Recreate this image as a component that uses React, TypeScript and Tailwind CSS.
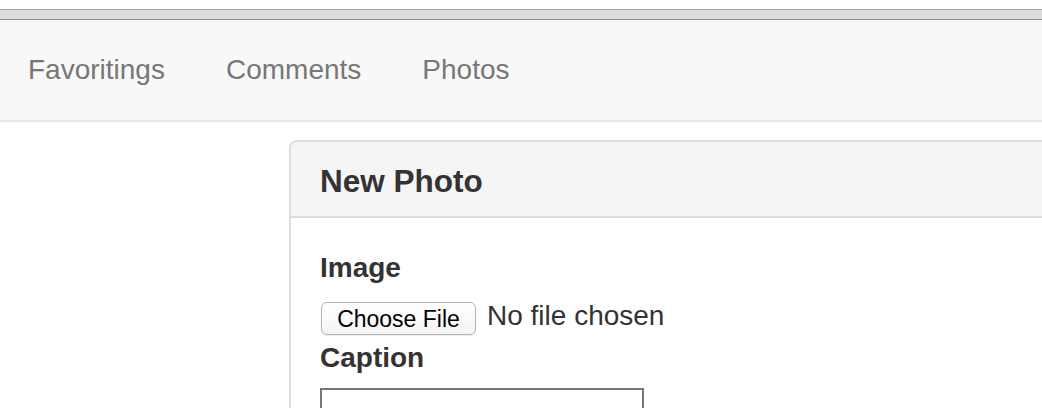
import React from 'react';

const links = ['Favoritings', 'Comments', 'Photos'];

const App = () => {
  return (
    <div className="w-[1042px] h-[408px] overflow-hidden bg-white font-['Liberation_Sans',Arial,sans-serif] text-[#333]">
      {/* browser chrome strip */}
      <div className="h-[9px] bg-white" />
      <div className="h-[11px] border-t border-b border-t-[#a9a9a9] border-b-[#8f8f8f] bg-[#dcdcdc]" />

      {/* navbar */}
      <nav className="h-[102px] bg-[#f8f8f8] border-b-2 border-[#e7e7e7]">
        <ul className="flex gap-[61px] pl-[28px] py-[30px]">
          {links.map((link) => (
            <li key={link} className="text-[28px] leading-[40px] text-[#777]">
              {link}
            </li>
          ))}
        </ul>
      </nav>

      <div className="pl-[289px] pt-[18px]">
        <div className="w-[900px] border-2 border-[#dddddd] rounded-tl-[8px] overflow-hidden">
          <div className="bg-[#f5f5f5] border-b-2 border-[#dddddd] pl-[29px] pt-[22px] pb-[18px]">
            <h3 className="text-[31.5px] leading-[34px] font-bold text-[#333]">New Photo</h3>
          </div>

          <div className="pl-[29px] pt-[30px]">
            <label className="block text-[28px] leading-[40px] font-bold mb-[10px]">Image</label>
            <div className="flex items-center gap-[11px] h-[40px] pl-[1px]">
              <button className="h-[33px] w-[155px] rounded-[6px] border border-[#b5b5b5] bg-gradient-to-b from-white to-[#f4f4f4] text-[23px] leading-none pt-[3px] text-black shadow-[0_1px_1px_rgba(0,0,0,0.08)]">
                Choose File
              </button>
              <span className="text-[28px] leading-[32px] text-[#333] -mt-[4px]">No file chosen</span>
            </div>
            <label className="block text-[28px] leading-[40px] font-bold mb-[10px]">Caption</label>
            <div className="w-[324px] h-[60px] border-2 border-[#767676] bg-white" />
          </div>
        </div>
      </div>
    </div>
  );
};

export default App;
